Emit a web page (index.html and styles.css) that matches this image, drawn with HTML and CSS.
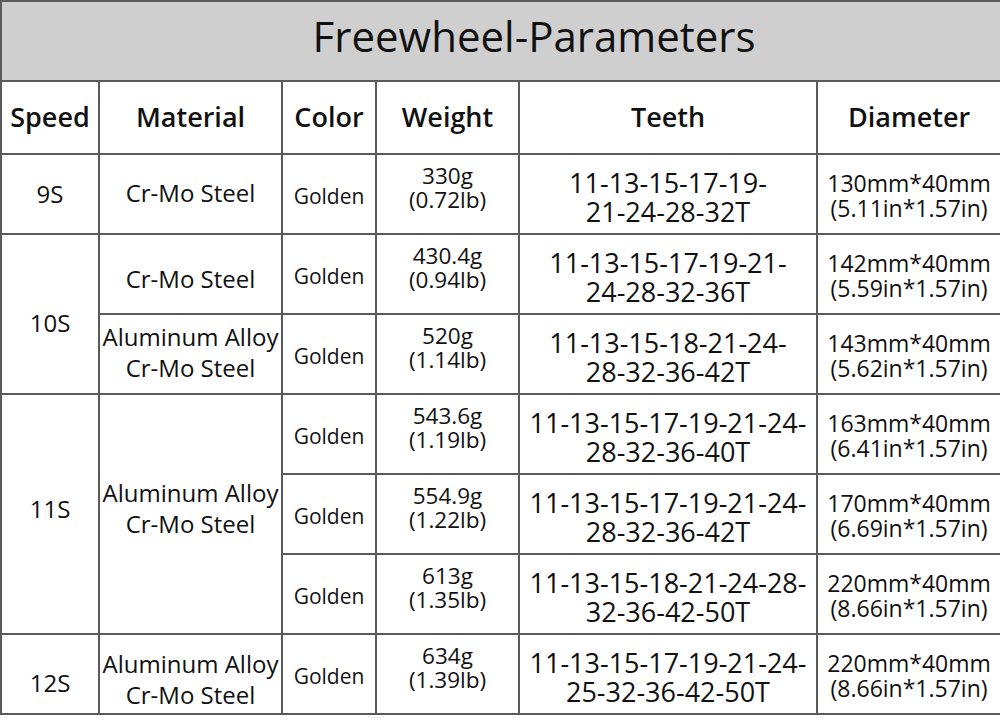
FILE: index.html
```html
<!DOCTYPE html>
<html>
<head>
<meta charset="utf-8">
<link rel="stylesheet" href="styles.css">
</head>
<body>
<table class="params">
  <colgroup>
    <col class="c-speed"><col class="c-mat"><col class="c-color"><col class="c-weight"><col class="c-teeth"><col class="c-dia">
  </colgroup>
  <thead>
    <tr class="title-row"><th colspan="6" class="title">Freewheel-Parameters</th></tr>
    <tr class="head-row">
      <th>Speed</th><th>Material</th><th>Color</th><th>Weight</th><th>Teeth</th><th>Diameter</th>
    </tr>
  </thead>
  <tbody>
    <tr class="r1">
      <td class="speed">9S</td>
      <td class="mat">Cr-Mo Steel</td>
      <td class="color">Golden</td>
      <td class="weight">330g<br>(0.72lb)</td>
      <td class="teeth">11-13-15-17-19-<br>21-24-28-32T</td>
      <td class="dia">130mm*40mm<br>(5.11in*1.57in)</td>
    </tr>
    <tr class="r2">
      <td class="speed low" rowspan="2">10S</td>
      <td class="mat low">Cr-Mo Steel</td>
      <td class="color">Golden</td>
      <td class="weight">430.4g<br>(0.94lb)</td>
      <td class="teeth">11-13-15-17-19-21-<br>24-28-32-36T</td>
      <td class="dia">142mm*40mm<br>(5.59in*1.57in)</td>
    </tr>
    <tr class="r3">
      <td class="mat">Aluminum Alloy<br>Cr-Mo Steel</td>
      <td class="color">Golden</td>
      <td class="weight">520g<br>(1.14lb)</td>
      <td class="teeth">11-13-15-18-21-24-<br>28-32-36-42T</td>
      <td class="dia">143mm*40mm<br>(5.62in*1.57in)</td>
    </tr>
    <tr class="r4">
      <td class="speed high" rowspan="3">11S</td>
      <td class="mat high" rowspan="3">Aluminum Alloy<br>Cr-Mo Steel</td>
      <td class="color">Golden</td>
      <td class="weight">543.6g<br>(1.19lb)</td>
      <td class="teeth">11-13-15-17-19-21-24-<br>28-32-36-40T</td>
      <td class="dia">163mm*40mm<br>(6.41in*1.57in)</td>
    </tr>
    <tr class="r5">
      <td class="color">Golden</td>
      <td class="weight">554.9g<br>(1.22lb)</td>
      <td class="teeth">11-13-15-17-19-21-24-<br>28-32-36-42T</td>
      <td class="dia">170mm*40mm<br>(6.69in*1.57in)</td>
    </tr>
    <tr class="r6">
      <td class="color">Golden</td>
      <td class="weight">613g<br>(1.35lb)</td>
      <td class="teeth">11-13-15-18-21-24-28-<br>32-36-42-50T</td>
      <td class="dia">220mm*40mm<br>(8.66in*1.57in)</td>
    </tr>
    <tr class="r7">
      <td class="speed low">12S</td>
      <td class="mat low">Aluminum Alloy<br>Cr-Mo Steel</td>
      <td class="color">Golden</td>
      <td class="weight">634g<br>(1.39lb)</td>
      <td class="teeth">11-13-15-17-19-21-24-<br>25-32-36-42-50T</td>
      <td class="dia">220mm*40mm<br>(8.66in*1.57in)</td>
    </tr>
  </tbody>
</table>
</body>
</html>
```

FILE: styles.css
```css
html, body {
  margin: 0;
  padding: 0;
  background: #ffffff;
}

.params {
  width: 1000px;
  border-collapse: collapse;
  table-layout: fixed;
  font-family: "Open Sans", "Liberation Sans", sans-serif;
  color: #111111;
}

.c-speed { width: 98px; }
.c-mat { width: 183px; }
.c-color { width: 94px; }
.c-weight { width: 143px; }
.c-teeth { width: 298px; }
.c-dia { width: 184px; }

.params th,
.params td {
  border: 2px solid #5a5a5a;
  padding: 0;
  text-align: center;
  vertical-align: middle;
  white-space: nowrap;
}

.title-row { height: 80px; }

.params .title {
  background: #cfcfcf;
  font-size: 42px;
  font-weight: 400;
  padding: 0 0 12px 66px;
  color: #111111;
}

.head-row { height: 73px; }

.params .head-row th {
  font-size: 27px;
  font-weight: 600;
  padding-bottom: 2px;
}

.params tbody tr { height: 80px; }

.params .speed { font-size: 24px; padding-bottom: 2px; }
.params .mat { font-size: 24px; line-height: 31px; padding-bottom: 4px; }
.params .color { font-size: 21px; padding-top: 4px; }
.params .weight { font-size: 22.5px; line-height: 24px; padding-bottom: 12px; }
.params .teeth { font-size: 27px; line-height: 29px; padding-top: 6px; }
.params .dia { font-size: 23px; line-height: 25px; padding-top: 4px; }

.params .low { padding-top: 16px; padding-bottom: 0; }
.params .mat.low { padding-top: 9px; }
.params .high { padding-bottom: 12px; padding-top: 0; }
```
